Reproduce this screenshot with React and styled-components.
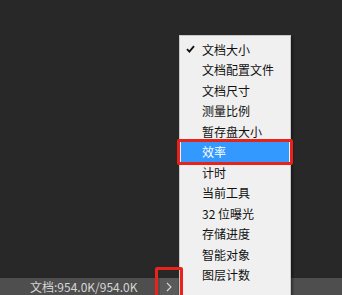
import React from "react";
import styled, { createGlobalStyle, css } from "styled-components";

const GlobalStyle = createGlobalStyle`
  html, body {
    margin: 0;
    padding: 0;
    background: #282828;
  }
  body {
    font-family: "Microsoft YaHei", "Noto Sans CJK SC", "Liberation Sans", sans-serif;
  }
`;

const Screen = styled.div`
  position: relative;
  width: 342px;
  height: 295px;
  display: flex;
  flex-direction: column;
  overflow: hidden;
  background: #282828;
`;

const Canvas = styled.div`
  flex: 1;
`;

const StatusBar = styled.div`
  height: 17px;
  display: flex;
  align-items: center;
  background: #4e4e4e;
  padding-left: 30px;
`;

const DocInfo = styled.span`
  font-size: 12px;
  color: #d6d6d6;
  width: 130px;
  white-space: nowrap;
`;

const ArrowButton = styled.div`
  position: relative;
  width: 18px;
  height: 17px;
  display: flex;
  align-items: center;
  justify-content: center;
  background: #5a5a5a;
`;

const RedFrame = styled.div`
  position: absolute;
  z-index: 2;
  border: 3px solid #e8231c;
  border-radius: 2px;
  pointer-events: none;
  ${({ $box }) => $box}
`;

const Menu = styled.ul`
  position: absolute;
  left: 179px;
  top: 35px;
  width: 108px;
  height: 270px;
  margin: 0;
  padding: 3px 1px 0;
  list-style: none;
  background: #f0f0f0;
  border: 1px solid #c8c8c8;
  box-shadow: 2px 2px 2px rgba(0, 0, 0, 0.35);
`;

const Item = styled.li`
  position: relative;
  height: 20.5px;
  display: flex;
  align-items: center;
  padding-left: 21px;
  font-size: 12px;
  color: #111;
  white-space: nowrap;

  ${({ $active }) =>
    $active &&
    css`
      background: #3399ff;
      color: #fff;
    `}
`;

const Check = styled.svg`
  position: absolute;
  left: 5px;
  top: 6px;
`;

const items = [
  "文档大小",
  "文档配置文件",
  "文档尺寸",
  "测量比例",
  "暂存盘大小",
  "效率",
  "计时",
  "当前工具",
  "32 位曝光",
  "存储进度",
  "智能对象",
  "图层计数",
];

const App = () => {
  return (
    <Screen>
      <GlobalStyle />
      <Canvas />
      <StatusBar>
        <DocInfo>文档:954.0K/954.0K</DocInfo>
        <ArrowButton>
          <svg width="6" height="10" viewBox="0 0 6 10">
            <path d="M1 1 L5 5 L1 9" fill="none" stroke="#d8d8d8" strokeWidth="1.1" />
          </svg>
          <RedFrame $box="left: -5px; top: -11px; width: 22px; height: 32px;" />
        </ArrowButton>
      </StatusBar>
      <Menu>
        {items.map((label, i) => (
          <Item key={label} $active={label === "效率"}>
            {i === 0 && (
              <Check width="9" height="8" viewBox="0 0 9 8">
                <path d="M1 4.2 L3.4 6.6 L8 1.2" fill="none" stroke="#111" strokeWidth="1.8" />
              </Check>
            )}
            {label}
            {label === "效率" && (
              <RedFrame $box="left: -4px; top: -3px; right: -4px; bottom: -3px;" />
            )}
          </Item>
        ))}
      </Menu>
    </Screen>
  );
};

export default App;
